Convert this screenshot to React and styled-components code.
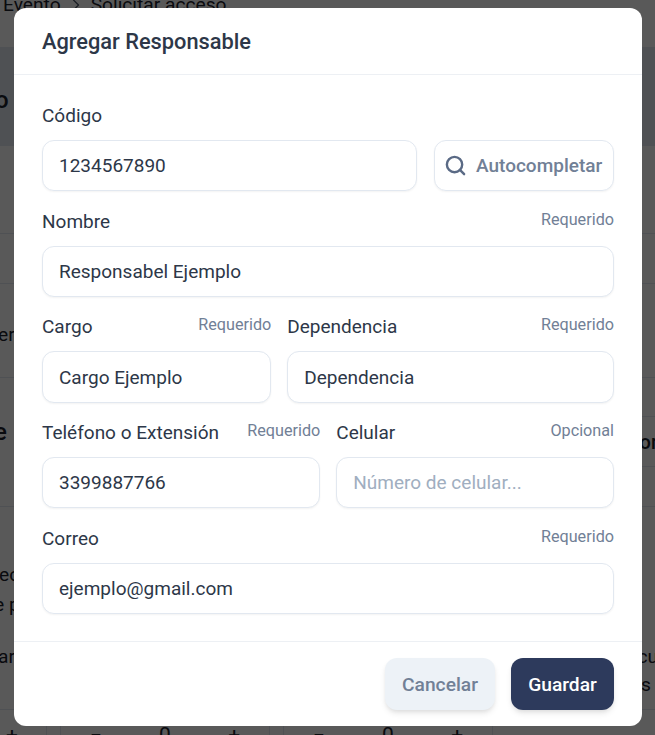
import React from "react";
import styled, { createGlobalStyle } from "styled-components";
import { Search, ChevronRight } from "lucide-react";

const Global = createGlobalStyle`
  html, body { margin: 0; padding: 0; height: 100%; overflow: hidden; }
  body { font-family: Roboto, "Liberation Sans", sans-serif; color: #2d3748; background: #fff; }
  * { box-sizing: border-box; }
`;

const Stage = styled.div`
  position: relative;
  width: 655px;
  height: 735px;
  overflow: hidden;
  background: #fff;
`;

const Backdrop = styled.div`
  display: flex;
  flex-direction: column;
  height: 735px;
  color: #1a202c;
`;

const BgRow = styled.div`
  flex: none;
  height: ${(p) => p.$h}px;
  padding-top: ${(p) => p.$pad || 0}px;
  display: flex;
  justify-content: space-between;
  align-items: center;
  border-bottom: ${(p) => (p.$line ? "1px solid #e2e8f0" : "none")};
  background: ${(p) => p.$bg || "transparent"};
  font-size: 19.2px;
  line-height: 28px;
  white-space: pre;
`;

const Crumbs = styled.div`
  display: flex;
  align-items: center;
  gap: 5px;
  height: 47px;
  margin-top: -38px;
  padding-left: 3px;
  font-size: 19.2px;
  svg { color: #4a5568; }
`;

const BgLeft = styled.span`
  margin-left: ${(p) => p.$off}px;
  margin-bottom: ${(p) => p.$mb || 0}px;
  font-size: ${(p) => p.$size || 19.2}px;
  font-weight: ${(p) => p.$weight || 400};
`;

const BgRight = styled.span`
  margin-left: auto;
  margin-right: ${(p) => p.$off || 0}px;
  font-size: ${(p) => p.$size || 19.2}px;
  font-weight: ${(p) => p.$weight || 400};
`;

const SidePanel = styled.div`
  margin-left: auto;
  width: 120px;
  height: 100%;
  display: flex;
  align-items: center;
  justify-content: flex-end;
  border-bottom: 1px solid #e2e8f0;
`;

const Stepper = styled.div`
  display: flex;
  gap: 13px;
  margin-left: -23px;
  height: 25px;
`;

const StepGroup = styled.div`
  flex: none;
  width: ${(p) => p.$w}px;
  display: flex;
  padding-top: 14px;
  border-right: 1px solid #e2e8f0;
  border-left: 1px solid #e2e8f0;
`;

const Step = styled.span`
  flex: 1 1 0;
  text-align: center;
  font-size: 21px;
  line-height: 22px;
`;

const Overlay = styled.div`
  position: absolute;
  inset: 0;
  background: rgba(0, 0, 0, 0.65);
  padding: 8px 13px 9px 14px;
`;

const Modal = styled.div`
  display: flex;
  flex-direction: column;
  height: 718px;
  background: #fff;
  border-radius: 12px;
  overflow: hidden;
`;

const Header = styled.header`
  flex: none;
  height: 67px;
  padding: 1px 28px 0;
  display: flex;
  align-items: center;
  border-bottom: 1px solid #edf0f4;
`;

const Title = styled.h2`
  margin: 0;
  font-size: 21.8px;
  font-weight: 500;
  line-height: 32px;
  color: #2d3748;
`;

const Body = styled.div`
  flex: 1;
  padding: 26px 28px 0;
  display: flex;
  flex-direction: column;
  gap: 15.53px;
`;

const Row = styled.div`
  display: flex;
  gap: ${(p) => p.$gap || 16}px;
  align-items: flex-end;
`;

const Field = styled.div`
  flex: ${(p) => (p.$w ? `0 0 ${p.$w}px` : "1 1 0")};
  min-width: 0;
`;

const LabelRow = styled.div`
  display: flex;
  justify-content: space-between;
  align-items: flex-start;
  height: 39px;
  padding-top: 1px;
`;

const Label = styled.label`
  font-size: 19px;
  line-height: 28.8px;
  color: #2d3748;
`;

const Hint = styled.span`
  font-size: 16.2px;
  line-height: 24px;
  color: #718096;
`;

const Input = styled.input`
  display: block;
  width: 100%;
  height: 51.2px;
  padding: 0 16px;
  border: 1px solid #e2e8f0;
  border-radius: 12px;
  background: #fff;
  box-shadow: 0 1px 2px rgba(0, 0, 0, 0.05);
  font-family: inherit;
  font-size: 19px;
  color: #2d3748;
  outline: none;
  &::placeholder { color: #a0aec0; opacity: 1; }
`;

const AutoButton = styled.button`
  flex: 0 0 180px;
  height: 51.2px;
  display: flex;
  align-items: center;
  gap: 9px;
  padding: 0 0 0 9px;
  border: 1px solid #e2e8f0;
  border-radius: 12px;
  background: #fff;
  box-shadow: 0 1px 2px rgba(0, 0, 0, 0.05);
  font-family: inherit;
  font-size: 19px;
  font-weight: 500;
  white-space: nowrap;
  color: #718096;
  svg { color: #5a6a85; flex: none; }
`;

const Footer = styled.footer`
  flex: none;
  height: 85px;
  padding: 16px 28px 0;
  display: flex;
  justify-content: flex-end;
  gap: 16px;
  border-top: 1px solid #edf0f4;
`;

const Button = styled.button`
  height: 52px;
  width: ${(p) => p.$w}px;
  padding: 0;
  border: none;
  border-radius: 12px;
  font-family: inherit;
  font-size: 19.2px;
  font-weight: 500;
  background: ${(p) => (p.$primary ? "#2d3a5c" : "#edf2f7")};
  color: ${(p) => (p.$primary ? "#fff" : "#718096")};
  box-shadow: 0 4px 6px -1px rgba(0, 0, 0, 0.1), 0 2px 4px -1px rgba(0, 0, 0, 0.06);
`;

function FormField({ label, hint, value, placeholder, w }) {
  return (
    <Field $w={w}>
      <LabelRow>
        <Label>{label}</Label>
        {hint && <Hint>{hint}</Hint>}
      </LabelRow>
      <Input defaultValue={value} placeholder={placeholder} />
    </Field>
  );
}

export default function App() {
  return (
    <Stage>
      <Global />
      <Backdrop>
        <BgRow $h={47}>
          <Crumbs>Evento<ChevronRight size={20} strokeWidth={1.5} />Solicitar acceso</Crumbs>
        </BgRow>
        <BgRow $h={99} $pad={8} $line $bg="#e2e8f0">
          <BgLeft $off={-5} $size={24} $weight={500}>o</BgLeft>
        </BgRow>
        <BgRow $h={88} $line />
        <BgRow $h={50} $line />
        <BgRow $h={94} $pad={8} $line>
          <BgLeft $off={-2}>er</BgLeft>
        </BgRow>
        <BgRow $h={39}>
          <SidePanel />
        </BgRow>
        <BgRow $h={50}>
          <BgLeft $off={-6} $mb={20} $size={24} $weight={500}>e</BgLeft>
          <SidePanel><BgRight $off={-3} $size={20} $weight={500}>or</BgRight></SidePanel>
        </BgRow>
        <BgRow $h={40} $line />
        <BgRow $h={53} />
        <BgRow $h={30}>
          <BgLeft $off={-1}>ec</BgLeft>
        </BgRow>
        <BgRow $h={30}>
          <BgLeft $off={-6}>e p</BgLeft>
        </BgRow>
        <BgRow $h={23} />
        <BgRow $h={28}>
          <BgLeft $off={-2}>ar</BgLeft>
          <BgRight $off={-3}>cu</BgRight>
        </BgRow>
        <BgRow $h={28}>
          <BgRight $off={4}>s</BgRight>
        </BgRow>
        <BgRow $h={11} $line />
        <Stepper>
          <StepGroup $w={70}><Step>+</Step></StepGroup>
          <StepGroup $w={210}><Step>−</Step><Step>0</Step><Step>+</Step></StepGroup>
          <StepGroup $w={210}><Step>−</Step><Step>0</Step><Step>+</Step></StepGroup>
        </Stepper>
      </Backdrop>
      <Overlay>
        <Modal>
          <Header><Title>Agregar Responsable</Title></Header>
          <Body>
            <Row $gap={17}>
              <FormField label="Código" value="1234567890" />
              <AutoButton><Search size={23} strokeWidth={2.5} />Autocompletar</AutoButton>
            </Row>
            <Row>
              <FormField label="Nombre" hint="Requerido" value="Responsabel Ejemplo" />
            </Row>
            <Row>
              <FormField label="Cargo" hint="Requerido" value="Cargo Ejemplo" w={229.3} />
              <FormField label="Dependencia" hint="Requerido" value="Dependencia" />
            </Row>
            <Row>
              <FormField label="Teléfono o Extensión" hint="Requerido" value="3399887766" w={278.3} />
              <FormField label="Celular" hint="Opcional" placeholder="Número de celular..." />
            </Row>
            <Row>
              <FormField label="Correo" hint="Requerido" value="ejemplo@gmail.com" />
            </Row>
          </Body>
          <Footer>
            <Button $w={110}>Cancelar</Button>
            <Button $primary $w={103}>Guardar</Button>
          </Footer>
        </Modal>
      </Overlay>
    </Stage>
  );
}
